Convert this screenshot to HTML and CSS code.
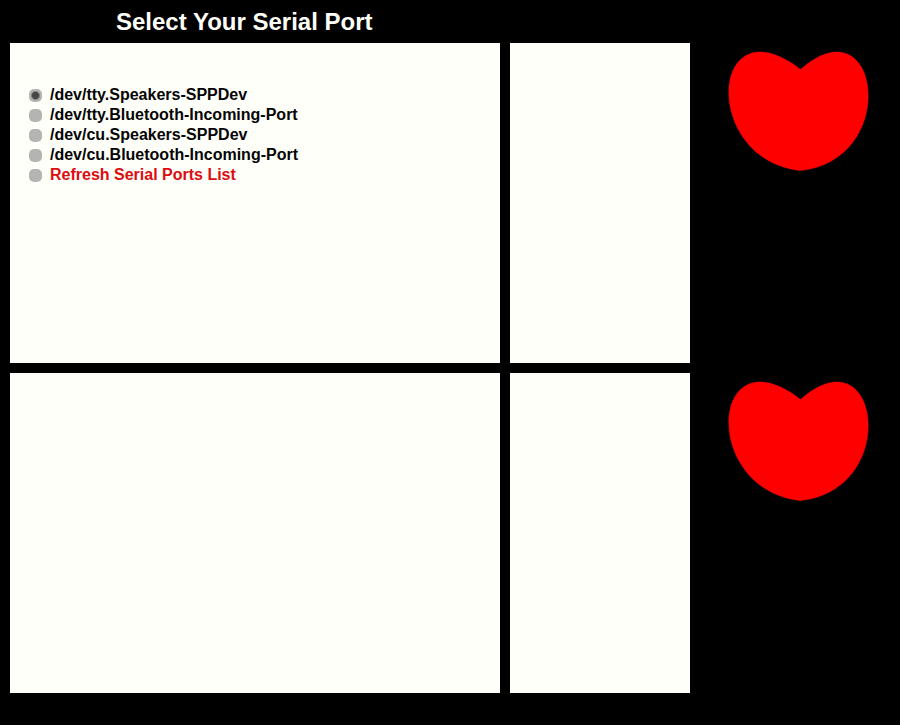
FILE: index.html
```html
<!DOCTYPE html>
<html lang="en">
<head>
<meta charset="utf-8">
<meta name="viewport" content="width=device-width, initial-scale=1">
<title>Select Your Serial Port</title>
<link rel="stylesheet" href="styles.css">
</head>
<body>
<h1 class="title">Select Your Serial Port</h1>
<main class="board">
  <form class="panel ports">
    <label class="port"><input class="port-radio" type="radio" name="port" checked>/dev/tty.Speakers-SPPDev</label>
    <label class="port"><input class="port-radio" type="radio" name="port">/dev/tty.Bluetooth-Incoming-Port</label>
    <label class="port"><input class="port-radio" type="radio" name="port">/dev/cu.Speakers-SPPDev</label>
    <label class="port"><input class="port-radio" type="radio" name="port">/dev/cu.Bluetooth-Incoming-Port</label>
    <label class="port port-refresh"><input class="port-radio" type="radio" name="port">Refresh Serial Ports List</label>
  </form>
  <section class="panel"></section>
  <div class="beat">
    <svg class="heart" viewBox="715 43 160 130" aria-hidden="true">
      <path d="M800.500 69.500C880 0 901 160 800.500 170.500C700 160 710 0 800.500 69.500Z"/>
    </svg>
  </div>
  <section class="panel"></section>
  <section class="panel"></section>
  <div class="beat">
    <svg class="heart" viewBox="715 43 160 130" aria-hidden="true">
      <path d="M800.500 69.500C880 0 901 160 800.500 170.500C700 160 710 0 800.500 69.500Z"/>
    </svg>
  </div>
</main>
</body>
</html>
```
FILE: styles.css
```css
* {
  box-sizing: border-box;
}

body {
  display: flex;
  flex-direction: column;
  min-height: 100vh;
  margin: 0;
  background: #000;
  font-family: "Liberation Sans", Arial, sans-serif;
  font-weight: bold;
}

.title {
  margin: 0;
  padding: 0 116px;
  color: #fffffa;
  font-size: 24px;
  line-height: 43px;
}

.board {
  display: grid;
  flex: 1;
  grid-template-columns: 49fr 18fr 19fr;
  grid-template-rows: 1fr 1fr;
  gap: 10px;
  padding: 0 10px 32px;
}

.panel {
  background: #fffff9;
}

.ports {
  display: flex;
  flex-direction: column;
  align-items: flex-start;
  padding: 42px 19px;
}

.port {
  display: flex;
  align-items: center;
  gap: 8px;
  color: #050505;
  font-size: 16px;
  line-height: 20px;
}

.port-refresh {
  color: #dc0c10;
}

.port-radio {
  width: 13px;
  height: 13px;
  margin: 0;
  appearance: none;
  border-radius: 5px;
  background: #b4b4b2;
}

.port-radio:checked {
  background: radial-gradient(circle, #464646 3px, #b4b4b2 5px);
}

.beat {
  display: flex;
  align-items: flex-start;
  justify-content: center;
}

.heart {
  width: 160px;
  height: 130px;
  fill: #fe0000;
  stroke: #fe0000;
  stroke-width: 0.5;
}
```
